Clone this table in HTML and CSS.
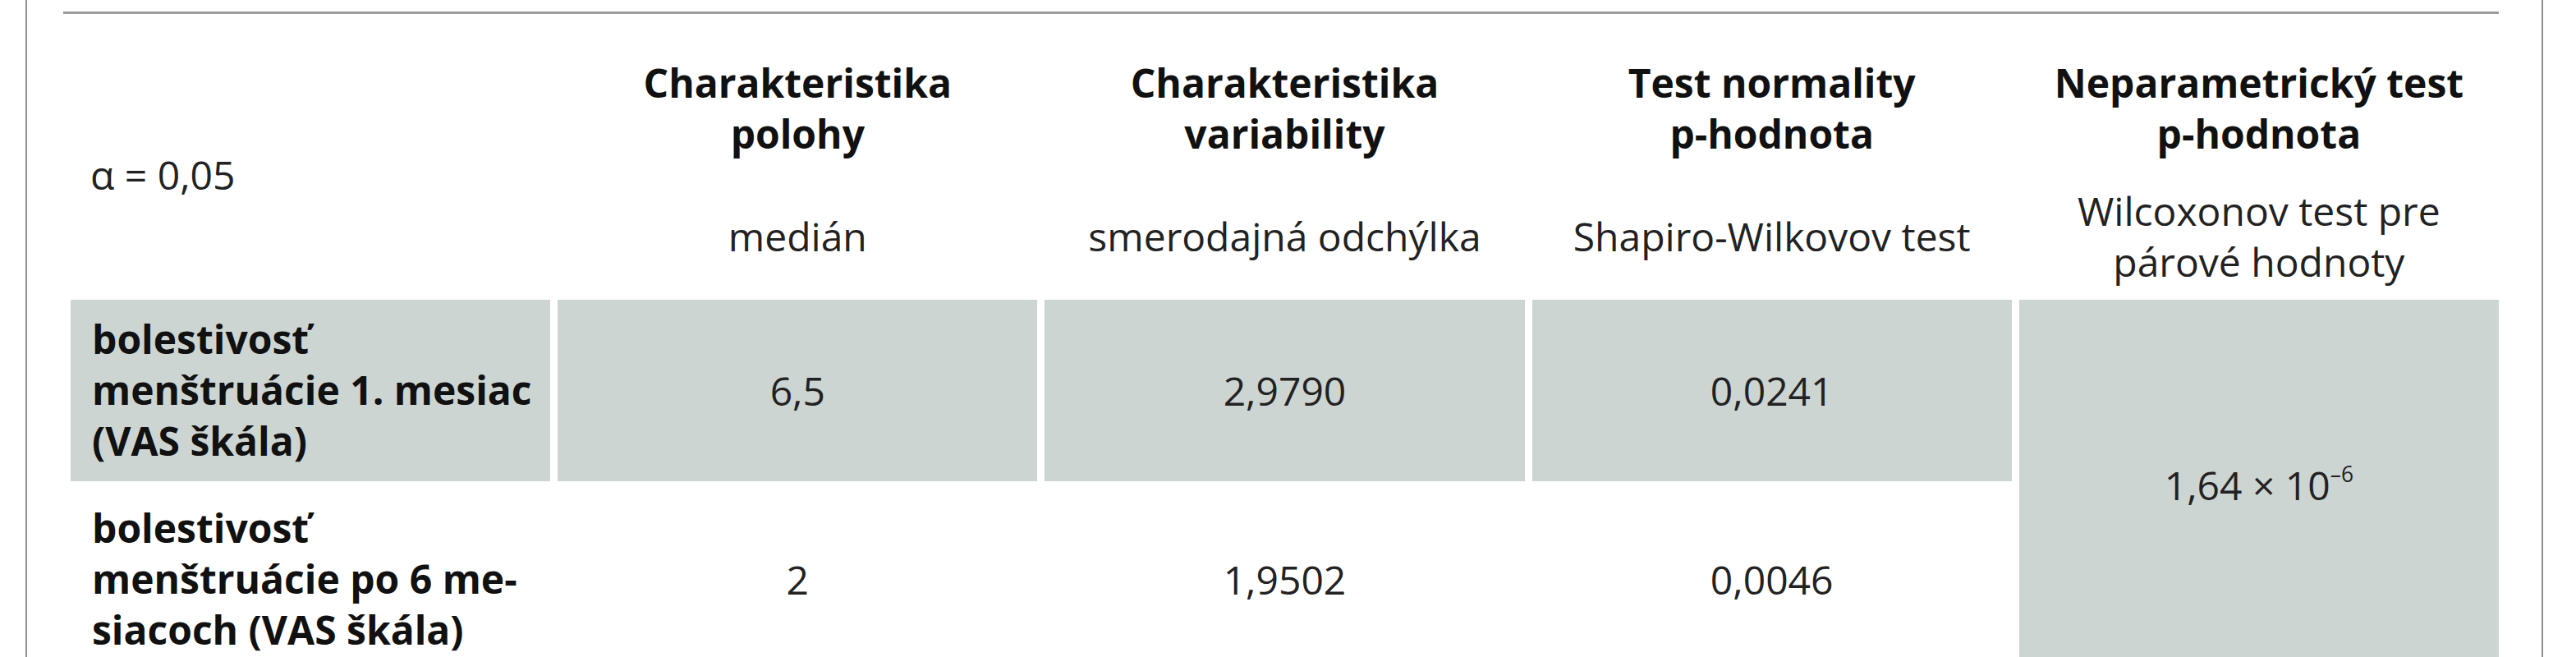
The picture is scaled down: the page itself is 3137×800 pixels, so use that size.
FILE: index.html
```html
<!DOCTYPE html>
<html lang="sk">
<head>
<meta charset="utf-8">
<title>Tabuľka</title>
<link rel="stylesheet" href="styles.css">
</head>
<body>
<div class="frame">
  <div class="content">
    <div class="rule"></div>
    <table class="stats">
      <thead>
        <tr class="head-main">
          <th rowspan="2" class="alpha">α = 0,05</th>
          <th>Charakteristika<br>polohy</th>
          <th>Charakteristika<br>variability</th>
          <th>Test normality<br>p-hodnota</th>
          <th>Neparametrický test<br>p-hodnota</th>
        </tr>
        <tr class="head-sub">
          <td>medián</td>
          <td>smerodajná odchýlka</td>
          <td>Shapiro-Wilkovov test</td>
          <td>Wilcoxonov test pre<br>párové hodnoty</td>
        </tr>
      </thead>
      <tbody>
        <tr>
          <th class="label shaded">bolestivosť<br>menštruácie 1. mesiac<br>(VAS škála)</th>
          <td class="shaded">6,5</td>
          <td class="shaded">2,9790</td>
          <td class="shaded">0,0241</td>
          <td class="shaded" rowspan="2">1,64 × 10<sup>–6</sup></td>
        </tr>
        <tr>
          <th class="label">bolestivosť<br>menštruácie po 6 me-<br>siacoch (VAS škála)</th>
          <td>2</td>
          <td>1,9502</td>
          <td>0,0046</td>
        </tr>
      </tbody>
    </table>
  </div>
</div>
</body>
</html>
```
FILE: styles.css
```css
html, body {
  margin: 0;
  padding: 0;
  background: #ffffff;
}

body {
  font-family: "Open Sans", "Noto Sans", sans-serif;
  color: #222222;
  overflow: hidden;
}

.frame {
  box-sizing: border-box;
  margin-left: 31px;
  width: 3066px;
  min-height: 100vh;
  border-left: 2px solid #8f8f8f;
  border-right: 2px solid #8f8f8f;
}

.content {
  padding: 14px 52px 0 44px;
}

.rule {
  border-top: 3px solid #9c9c9c;
}

.stats {
  width: calc(100% + 9px);
  margin-right: -9px;
  border-collapse: separate;
  border-spacing: 9px;
  table-layout: fixed;
  font-size: 48px;
  line-height: 62px;
}

.head-main th {
  font-weight: 700;
  color: #111111;
  text-align: center;
  vertical-align: top;
  padding: 44px 0 18px;
  white-space: nowrap;
}

.head-main th.alpha {
  font-weight: 400;
  color: #222222;
  text-align: left;
  vertical-align: middle;
  padding: 44px 0 0 24px;
}

.head-sub td {
  text-align: center;
  vertical-align: middle;
  padding: 5px 0 6px;
  white-space: nowrap;
}

tbody td {
  text-align: center;
  vertical-align: middle;
  padding: 0;
}

.label {
  font-weight: 700;
  color: #111111;
  text-align: left;
  vertical-align: middle;
  padding: 17px 0 18px 26px;
  white-space: nowrap;
}

.shaded {
  background: #cdd5d3;
}

sup {
  font-size: 0.55em;
  line-height: 0;
  vertical-align: 0.85em;
}
```
